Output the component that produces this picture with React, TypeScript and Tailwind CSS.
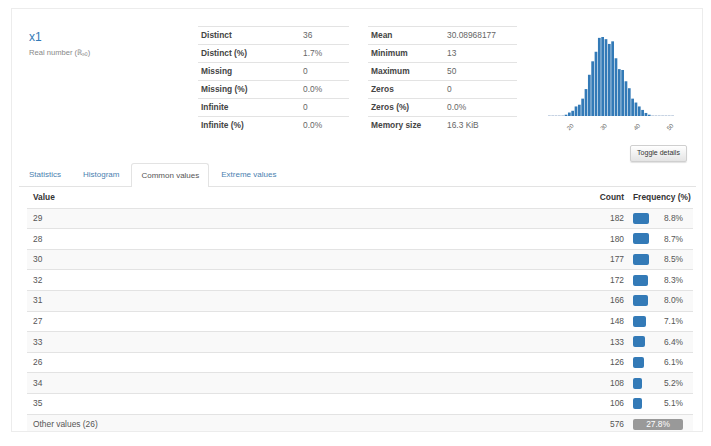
import React from "react";

const STATS_LEFT: [string, string][] = [
  ["Distinct", "36"],
  ["Distinct (%)", "1.7%"],
  ["Missing", "0"],
  ["Missing (%)", "0.0%"],
  ["Infinite", "0"],
  ["Infinite (%)", "0.0%"],
];

const STATS_RIGHT: [string, string][] = [
  ["Mean", "30.08968177"],
  ["Minimum", "13"],
  ["Maximum", "50"],
  ["Zeros", "0"],
  ["Zeros (%)", "0.0%"],
  ["Memory size", "16.3 KiB"],
];

// value -> count, used for the mini histogram
const HIST: Record<number, number> = {
  13: 1, 14: 1, 15: 1, 16: 1, 17: 1, 18: 3, 19: 8, 20: 12, 21: 22, 22: 26,
  23: 40, 24: 62, 25: 95, 26: 126, 27: 148, 28: 180, 29: 182, 30: 177,
  31: 166, 32: 172, 33: 133, 34: 108, 35: 106, 36: 80, 37: 64, 38: 40,
  39: 31, 40: 22, 41: 14, 42: 7, 43: 3, 44: 1, 45: 0, 46: 0, 47: 1, 48: 0,
  49: 1, 50: 1,
};

const COMMON = [
  { value: "29", count: 182, pct: "8.8%" },
  { value: "28", count: 180, pct: "8.7%" },
  { value: "30", count: 177, pct: "8.5%" },
  { value: "32", count: 172, pct: "8.3%" },
  { value: "31", count: 166, pct: "8.0%" },
  { value: "27", count: 148, pct: "7.1%" },
  { value: "33", count: 133, pct: "6.4%" },
  { value: "26", count: 126, pct: "6.1%" },
  { value: "34", count: 108, pct: "5.2%" },
  { value: "35", count: 106, pct: "5.1%" },
];

function StatTable({ rows, labelWidth, width }: { rows: [string, string][]; labelWidth: string; width: string }) {
  return (
    <div className={width}>
      {rows.map(([label, value]) => (
        <div key={label} className="flex h-[18px] items-center border-t border-[#e3e3e3]">
          <div className={`${labelWidth} pl-[3px] font-bold text-[#444]`}>{label}</div>
          <div className="text-[#666]">{value}</div>
        </div>
      ))}
    </div>
  );
}

function MiniHistogram() {
  const base = 88;
  const step = 3.33;
  return (
    <svg width="136" height="110" viewBox="0 0 136 110" className="mt-[2px] ml-[27px] shrink-0">
      {Object.entries(HIST).map(([v, c]) => {
        const x = 4 + (Number(v) - 13) * step;
        const h = Math.max(0.8, (c / 182) * 79);
        return (
          <rect key={v} x={x} y={base - h} width={step - 0.6} height={h}
            fill={c <= 1 ? "#b9c9dc" : "#337ab7"} />
        );
      })}
      {[20, 30, 40, 50].map((t) => {
        const x = 4 + (t - 13) * step - 1;
        return (
          <text key={t} x={x} y={101} fontSize="6" fill="#666" textAnchor="middle"
            transform={`rotate(-45 ${x} 99)`} fontFamily="Liberation Sans, Arial, sans-serif">
            {t}
          </text>
        );
      })}
    </svg>
  );
}

export default function App() {
  const tabs = ["Statistics", "Histogram", "Common values", "Extreme values"];
  const active = "Common values";

  return (
    <div className="w-[711px] h-[446px] bg-white pt-[8px] pl-[11px] font-['Liberation_Sans',Arial,sans-serif] text-[8.4px] text-[#555]">
      <div className="w-[692px] h-[424px] border border-[#ececec] overflow-hidden">
        {/* overview */}
        <div className="flex h-[136px] pt-[17px]">
          <div className="w-[186px] pl-[17px] pt-[4px]">
            <div className="text-[12px] leading-[14px] text-[#337ab7]">x1</div>
            <div className="mt-[3px] text-[7.6px] text-[#888]">
              Real number (ℝ<sub className="text-[5px]">≥0</sub>)
            </div>
          </div>
          <StatTable rows={STATS_LEFT} labelWidth="w-[105px]" width="w-[151px]" />
          <div className="ml-[19px]">
            <StatTable rows={STATS_RIGHT} labelWidth="w-[79px]" width="w-[149px]" />
          </div>
          <MiniHistogram />
        </div>

        <div className="flex h-[17px] justify-end pr-[15px]">
          <button className="h-[17px] w-[57px] rounded-[2px] border border-[#cfcfcf] bg-gradient-to-b from-white to-[#e4e4e4] text-[7px] text-[#333] shadow-[0_1px_1px_rgba(0,0,0,0.12)]">
            Toggle details
          </button>
        </div>

        {/* tabs */}
        <div className="mt-[1px] ml-[7px] mr-[6px] flex h-[24px] border-b border-[#e3e3e3] text-[8px]">
          {tabs.map((t) =>
            t === active ? (
              <div key={t} className="mb-[-1px] mr-[2px] flex items-center rounded-t-[3px] border border-b-0 border-[#e3e3e3] bg-white px-[9px] text-[#555]">
                {t}
              </div>
            ) : (
              <div key={t} className="mr-[2px] flex items-center border border-transparent px-[9px] text-[#4a7fb0]">
                {t}
              </div>
            )
          )}
        </div>

        {/* common values table */}
        <div className="ml-[15px] w-[666px]">
          <div className="flex h-[20.6px] items-center">
            <div className="flex-1 pl-[6px] font-bold text-[#333]">Value</div>
            <div className="w-[53px] pr-[4px] text-right font-bold text-[#333]">Count</div>
            <div className="w-[65px] pl-[5px] font-bold text-[#333]">Frequency (%)</div>
          </div>
          {COMMON.map((r, i) => (
            <div key={r.value} className={`flex h-[20.6px] items-center border-t border-[#e3e3e3] ${i % 2 === 0 ? "bg-[#f9f9f9]" : "bg-white"}`}>
              <div className="flex-1 pl-[6px]">{r.value}</div>
              <div className="w-[53px] pr-[4px] text-right">{r.count}</div>
              <div className="flex w-[65px] items-center pl-[5px] pr-[10px]">
                <div className="h-[11px] rounded-[2px] bg-[#337ab7]" style={{ width: `${(r.count / 182) * 16}px` }} />
                <div className="flex-1 text-right">{r.pct}</div>
              </div>
            </div>
          ))}
          <div className="flex h-[20.6px] items-center border-t border-[#e3e3e3] bg-[#f9f9f9]">
            <div className="flex-1 pl-[6px]">Other values (26)</div>
            <div className="w-[53px] pr-[4px] text-right">576</div>
            <div className="flex w-[65px] items-center pl-[5px] pr-[10px]">
              <div className="flex h-[11px] w-full items-center justify-center rounded-[2px] bg-[#999] text-white">
                27.8%
              </div>
            </div>
          </div>
        </div>
      </div>
    </div>
  );
}
